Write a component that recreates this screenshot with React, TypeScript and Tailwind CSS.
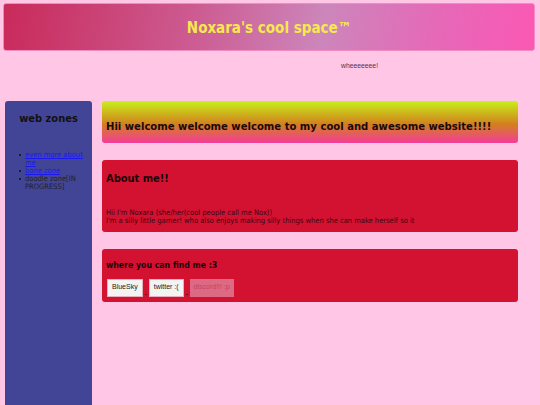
import React from "react";

const cond = { fontFamily: '"DejaVu Sans Condensed", "DejaVu Sans", sans-serif' };
const arial = { fontFamily: '"Liberation Sans", Arial, sans-serif' };

function Item({ children }: { children: React.ReactNode }) {
  return (
    <li className="flex">
      <span className="w-[6px] shrink-0 pt-[3px]">
        <span className="block w-[2px] h-[2px] rounded-full bg-[#111]" />
      </span>
      <span>{children}</span>
    </li>
  );
}

export default function App() {
  return (
    <div className="min-h-[405px] bg-[#ffc6e6] overflow-hidden" style={cond}>
      <div className="pt-[3px] pl-[3px] pr-[5px]">
        <div className="h-[48px] rounded-[3px] border border-[#f08ac0] flex items-center justify-center pt-[2px] bg-[linear-gradient(100deg,#c92a5a_0%,#cc5a90_35%,#cc86bb_60%,#e46ab8_80%,#fb58b4_100%)]">
          <h1 className="text-[15px] font-bold text-[#f6ea4a] leading-none">Noxara's cool space™</h1>
        </div>
      </div>
      <div className="h-[50px] flex pt-[12px]">
        <span className="ml-[341px] text-[6.8px] text-[#5a3050] leading-none" style={arial}>wheeeeeee!</span>
      </div>
      <div className="flex pl-[5px] pr-[22px] gap-[10px]">
        <div className="w-[87px] h-[320px] shrink-0 rounded-t-[3px] bg-[#424596] pt-[12px]">
          <h2 className="text-[11px] font-bold text-[#111] text-center leading-none">web zones</h2>
          <ul className="mt-[27px] pl-[14px] pr-[3px] text-[7.5px] leading-[8px] text-[#222]">
            <Item><a className="text-[#1a1aee] underline" href="#">even more about me</a></Item>
            <Item><a className="text-[#1a1aee] underline" href="#">bone zone</a></Item>
            <Item>doodle zone[IN PROGRESS]</Item>
          </ul>
        </div>
        <div className="flex-1 flex flex-col gap-[17px]">
          <div className="h-[42px] rounded-[3px] flex items-end pb-[11px] pl-[4px] bg-[linear-gradient(180deg,#c8f01a_0%,#d2801e_55%,#f53c98_100%)]">
            <h2 className="text-[11.2px] font-bold text-[#1a0a08] leading-none">Hii welcome welcome welcome to my cool and awesome website!!!!</h2>
          </div>
          <div className="h-[72px] rounded-[3px] bg-[#d31130] pl-[4px] pt-[13px]">
            <h2 className="text-[11px] font-bold text-[#1a0508] leading-none">About me!!</h2>
            <p className="mt-[25px] text-[7.5px] leading-[8px] text-[#3a0814]">
              Hii I'm Noxara (she/her(cool people call me Nox))
              <br />
              I'm a silly little gamer! who also enjoys making silly things when she can make herself so it
            </p>
          </div>
          <div className="h-[53px] rounded-[3px] bg-[#d31130] pl-[4px] pt-[12px]">
            <h2 className="text-[8.7px] font-bold text-[#1a0508] leading-none">where you can find me :3</h2>
            <div className="mt-[9px] ml-[1px] flex items-end" style={arial}>
              <span className="h-[18px] px-[4px] flex items-center bg-[#f3f3f3] border border-[#e8b0bc] text-[7px] text-[#222]">BlueSky</span>
              <span className="w-[6px] h-[2px] mb-[1px] flex justify-center"><span className="w-[2px] h-[1px] bg-[#6a1020]" /></span>
              <span className="h-[18px] px-[4px] flex items-center bg-[#f3f3f3] border border-[#e8b0bc] text-[7px] text-[#222]">twitter :(</span>
              <span className="w-[6px] h-[2px] mb-[1px] flex justify-center"><span className="w-[2px] h-[1px] bg-[#6a1020]" /></span>
              <span className="h-[18px] px-[4px] flex items-center bg-[#dc6a84] text-[7px] text-[#c24462]">discord!!! :p</span>
            </div>
          </div>
        </div>
      </div>
    </div>
  );
}
